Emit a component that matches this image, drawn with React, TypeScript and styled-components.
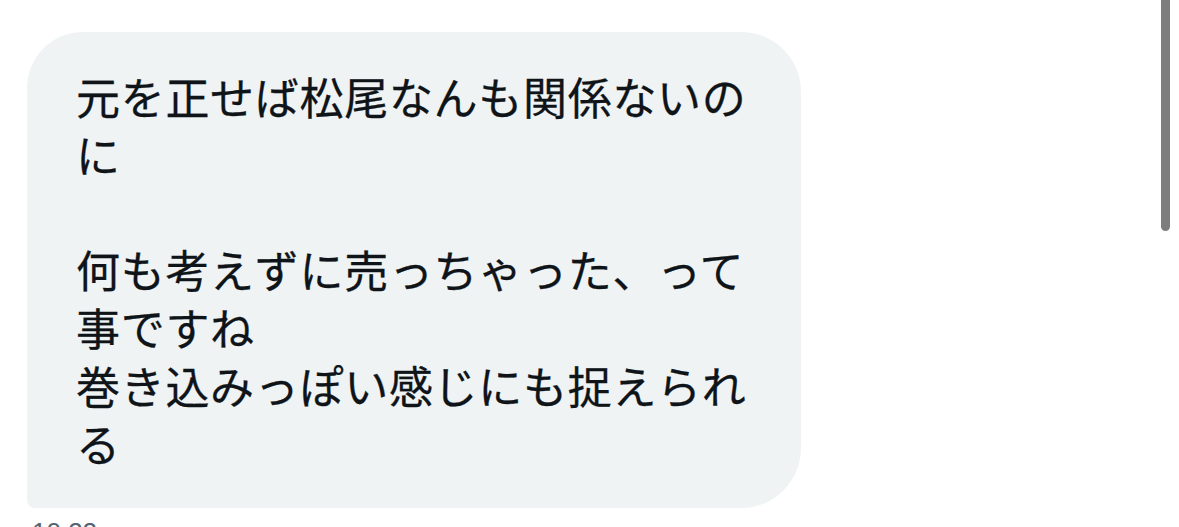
import React from 'react';
import styled, { createGlobalStyle } from 'styled-components';

const GlobalStyle = createGlobalStyle`
	html, body {
		margin: 0;
		padding: 0;
		background: #ffffff;
		overflow: hidden;
	}
	body {
		font-family: 'Noto Sans CJK JP', 'Noto Sans', sans-serif;
	}
`;

const message = '元を正せば松尾なんも関係ないのに\n\n何も考えずに売っちゃった、って事ですね\n巻き込みっぽい感じにも捉えられる';

export default function App() {
	return (
		<>
			<GlobalStyle />
			<Screen>
				<Thread>
					<MessageGroup>
						<Bubble>
							<BubbleText>{message}</BubbleText>
						</Bubble>
						<Timestamp>10:22</Timestamp>
					</MessageGroup>
				</Thread>
				<ScrollIndicator />
			</Screen>
		</>
	);
}

const Screen = styled.div`
	position: relative;
	width: 1179px;
	height: 527px;
	overflow: hidden;
	background: #ffffff;
`;

const Thread = styled.div`
	display: flex;
	flex-direction: column;
	padding: 32px 0 0 27px;
`;

const MessageGroup = styled.div`
	display: flex;
	flex-direction: column;
	align-items: flex-start;
`;

const Bubble = styled.div`
	box-sizing: border-box;
	width: 774px;
	padding: 36px 40px 35px 49px;
	background: #eff3f4;
	border-radius: 56px 60px 60px 8px;
`;

const BubbleText = styled.p`
	margin: 0;
	white-space: pre-wrap;
	line-break: strict;
	font-size: 44px;
	letter-spacing: 0.7px;
	line-height: 57.8px;
	color: #0f1419;
	-webkit-text-stroke: 0.3px #0f1419;
`;

const Timestamp = styled.span`
	margin-top: 9px;
	margin-left: 5px;
	font-family: 'Liberation Sans', Arial, sans-serif;
	font-size: 26px;
	line-height: 31px;
	color: #536471;
`;

const ScrollIndicator = styled.div`
	position: absolute;
	top: 0;
	right: 9px;
	width: 9px;
	height: 231px;
	background: #7d7d7d;
	border-radius: 0 0 5px 5px;
`;
